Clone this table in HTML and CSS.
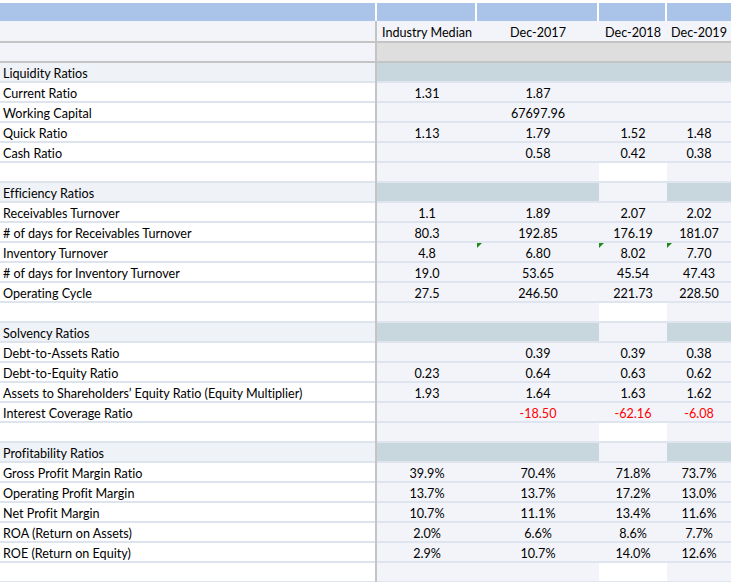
FILE: index.html
```html
<!DOCTYPE html>
<html>
<head>
<meta charset="utf-8">
<link rel="stylesheet" href="styles.css">
</head>
<body>
<div class="sheet">
  <div class="row top"><div class="lab"></div><div class="vl"></div><div class="c"></div><div class="c"></div><div class="c"></div><div class="c"></div></div>
  <div class="row head"><div class="lab"></div><div class="vl"></div><div class="c">Industry Median</div><div class="c">Dec-2017</div><div class="c">Dec-2018</div><div class="c">Dec-2019</div></div>
  <div class="row blank"><div class="lab"></div><div class="vl"></div><div class="c"></div><div class="c"></div><div class="c"></div><div class="c"></div></div>

  <div class="row sec"><div class="lab">Liquidity Ratios</div><div class="vl"></div><div class="c s"></div><div class="c s"></div><div class="c s"></div><div class="c s"></div></div>
  <div class="row"><div class="lab">Current Ratio</div><div class="vl"></div><div class="c">1.31</div><div class="c">1.87</div><div class="c"></div><div class="c"></div></div>
  <div class="row"><div class="lab">Working Capital</div><div class="vl"></div><div class="c"></div><div class="c">67697.96</div><div class="c"></div><div class="c"></div></div>
  <div class="row"><div class="lab">Quick Ratio</div><div class="vl"></div><div class="c">1.13</div><div class="c">1.79</div><div class="c">1.52</div><div class="c">1.48</div></div>
  <div class="row"><div class="lab">Cash Ratio</div><div class="vl"></div><div class="c"></div><div class="c">0.58</div><div class="c">0.42</div><div class="c">0.38</div></div>
  <div class="row"><div class="lab"></div><div class="vl"></div><div class="c"></div><div class="c"></div><div class="c w"></div><div class="c"></div></div>

  <div class="row sec"><div class="lab">Efficiency Ratios</div><div class="vl"></div><div class="c s"></div><div class="c s"></div><div class="c"></div><div class="c s"></div></div>
  <div class="row"><div class="lab">Receivables Turnover</div><div class="vl"></div><div class="c">1.1</div><div class="c">1.89</div><div class="c">2.07</div><div class="c">2.02</div></div>
  <div class="row"><div class="lab"># of days for Receivables Turnover</div><div class="vl"></div><div class="c">80.3</div><div class="c">192.85</div><div class="c">176.19</div><div class="c">181.07</div></div>
  <div class="row"><div class="lab">Inventory Turnover</div><div class="vl"></div><div class="c">4.8</div><div class="c tri">6.80</div><div class="c tri">8.02</div><div class="c tri">7.70</div></div>
  <div class="row"><div class="lab"># of days for Inventory Turnover</div><div class="vl"></div><div class="c">19.0</div><div class="c">53.65</div><div class="c">45.54</div><div class="c">47.43</div></div>
  <div class="row"><div class="lab">Operating Cycle</div><div class="vl"></div><div class="c">27.5</div><div class="c">246.50</div><div class="c">221.73</div><div class="c">228.50</div></div>
  <div class="row"><div class="lab"></div><div class="vl"></div><div class="c"></div><div class="c"></div><div class="c w"></div><div class="c"></div></div>

  <div class="row sec"><div class="lab">Solvency Ratios</div><div class="vl"></div><div class="c s"></div><div class="c s"></div><div class="c"></div><div class="c s"></div></div>
  <div class="row"><div class="lab">Debt-to-Assets Ratio</div><div class="vl"></div><div class="c"></div><div class="c">0.39</div><div class="c">0.39</div><div class="c">0.38</div></div>
  <div class="row"><div class="lab">Debt-to-Equity Ratio</div><div class="vl"></div><div class="c">0.23</div><div class="c">0.64</div><div class="c">0.63</div><div class="c">0.62</div></div>
  <div class="row"><div class="lab">Assets to Shareholders’ Equity Ratio (Equity Multiplier)</div><div class="vl"></div><div class="c">1.93</div><div class="c">1.64</div><div class="c">1.63</div><div class="c">1.62</div></div>
  <div class="row"><div class="lab">Interest Coverage Ratio</div><div class="vl"></div><div class="c"></div><div class="c neg">-18.50</div><div class="c neg">-62.16</div><div class="c neg">-6.08</div></div>
  <div class="row"><div class="lab"></div><div class="vl"></div><div class="c"></div><div class="c"></div><div class="c w"></div><div class="c"></div></div>

  <div class="row sec"><div class="lab">Profitability Ratios</div><div class="vl"></div><div class="c s"></div><div class="c s"></div><div class="c"></div><div class="c s"></div></div>
  <div class="row"><div class="lab">Gross Profit Margin Ratio</div><div class="vl"></div><div class="c">39.9%</div><div class="c">70.4%</div><div class="c">71.8%</div><div class="c">73.7%</div></div>
  <div class="row"><div class="lab">Operating Profit Margin</div><div class="vl"></div><div class="c">13.7%</div><div class="c">13.7%</div><div class="c">17.2%</div><div class="c">13.0%</div></div>
  <div class="row"><div class="lab">Net Profit Margin</div><div class="vl"></div><div class="c">10.7%</div><div class="c">11.1%</div><div class="c">13.4%</div><div class="c">11.6%</div></div>
  <div class="row"><div class="lab">ROA (Return on Assets)</div><div class="vl"></div><div class="c">2.0%</div><div class="c">6.6%</div><div class="c">8.6%</div><div class="c">7.7%</div></div>
  <div class="row"><div class="lab">ROE (Return on Equity)</div><div class="vl"></div><div class="c">2.9%</div><div class="c">10.7%</div><div class="c">14.0%</div><div class="c">12.6%</div></div>
  <div class="row"><div class="lab"></div><div class="vl"></div><div class="c"></div><div class="c"></div><div class="c w"></div><div class="c"></div></div>
</div>
</body>
</html>
```

FILE: styles.css
```css
html, body {
  margin: 0;
  padding: 0;
  background: #ffffff;
}

.sheet {
  width: 731px;
  height: 582px;
  overflow: hidden;
  padding-top: 3px;
  box-sizing: border-box;
  font-family: Lato, "Liberation Sans", sans-serif;
  font-size: 12.6px;
  font-variant-ligatures: none;
  color: #000000;
}

.row {
  display: grid;
  grid-template-columns: 375px 2px 100px 122px 68px 64px;
  height: 20px;
}

.row > div {
  box-sizing: border-box;
  height: 20px;
  line-height: 18px;
  padding-top: 2px;
  white-space: nowrap;
  overflow: hidden;
}

.lab {
  padding-left: 3px;
  background: #ffffff;
  border-bottom: 2px solid #dde4ee;
}

.vl {
  background: #c4c4c4;
}

.c {
  position: relative;
  text-align: center;
  background: #f2f4f9;
  border-bottom: 2px solid #dfe5ef;
}

.c.s {
  background: #c8d6dd;
}

.c.w {
  background: #ffffff;
}

.row.sec .lab {
  background: #eff2f7;
}

.neg {
  color: #ff0000;
}

.tri::before {
  content: "";
  position: absolute;
  left: 0;
  top: 0;
  border-top: 5px solid #1e8a1e;
  border-right: 5px solid transparent;
}

/* top blue band */
.row.top {
  height: 18px;
}
.row.top > div {
  height: 18px;
  padding-top: 0;
  border-bottom: none;
}
.row.top .lab {
  background: #aac4e9;
}
.row.top .vl {
  background: #ffffff;
}
.row.top .c {
  background: #aac4e9;
  border-right: 2px solid #ffffff;
}
.row.top .c:last-child {
  border-right: none;
}

/* column header row */
.row.head {
  height: 22px;
}
.row.head > div {
  height: 22px;
  line-height: 18px;
  padding-top: 3px;
  border-bottom: 2px solid #c4c4c4;
  background: #f2f4f9;
}
.row.head .vl {
  background: #c4c4c4;
}

/* grey blank row */
.row.blank > div {
  border-bottom: 2px solid #c4c4c4;
  background: #dedede;
}
.row.blank .lab {
  background: #f2f4f9;
}
.row.blank .vl {
  background: #c4c4c4;
}
```
